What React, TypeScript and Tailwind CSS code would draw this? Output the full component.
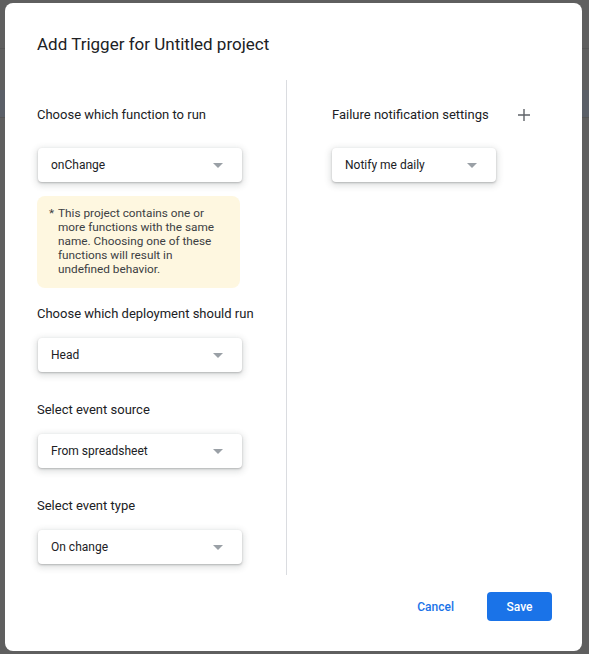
import React from "react";

const font = { fontFamily: "Roboto, 'Liberation Sans', Arial, sans-serif" };

function Select({ value, width }: { value: string; width: string }) {
  return (
    <div
      className={`${width} h-[34px] flex items-center justify-between pl-[13px] pr-[19px] bg-white rounded-[4px] shadow-[0_1px_2px_rgba(60,64,67,0.3),0_2px_6px_2px_rgba(60,64,67,0.15)]`}
    >
      <span className="text-[12px] text-[#202124] leading-[16px]">{value}</span>
      <svg width="10" height="5" viewBox="0 0 10 5">
        <path d="M0 0 L10 0 L5 5 Z" fill="#9aa0a6" />
      </svg>
    </div>
  );
}

function Label({ children, className = "" }: { children: React.ReactNode; className?: string }) {
  return <div className={`text-[13px] leading-[16px] text-[#202124] whitespace-nowrap ${className}`}>{children}</div>;
}

export default function App() {
  return (
    <div className="relative w-[589px] h-[654px] bg-[#5f5f5f] overflow-hidden" style={font}>
      <div className="h-[48px]" />
      <div className="h-px bg-[#565656]" />
      <div className="h-[41px]" />
      <div className="h-[27px] bg-[#5b6068]" />
      <div className="h-px bg-[#565656]" />

      <div className="absolute left-[5px] top-[3px] w-[577px] h-[648px] bg-white rounded-[8px] flex flex-col">
        <div className="pl-[32px] pt-[29px] text-[17px] leading-[24px] text-[#202124] whitespace-nowrap">
          Add Trigger for Untitled project
        </div>

        <div className="mt-[24px] flex h-[495px]">
          <div className="ml-[32px] w-[206px] flex flex-col">
            <Label className="mt-[27px]">Choose which function to run</Label>
            <div className="mt-[25px] ml-px">
              <Select value="onChange" width="w-[204px]" />
            </div>
            <div className="mt-[14px] w-[203px] h-[92px] bg-[#fef7e0] rounded-[8px] pt-[10px] pl-[12px] flex text-[11.8px] leading-[14px] text-[#3c4043]">
              <span className="w-[9px]">*</span>
              <div className="whitespace-nowrap">
                <div>This project contains one or</div>
                <div>more functions with the same</div>
                <div>name. Choosing one of these</div>
                <div>functions will result in</div>
                <div>undefined behavior.</div>
              </div>
            </div>
            <Label className="mt-[18px]">Choose which deployment should run</Label>
            <div className="mt-[16px] ml-px">
              <Select value="Head" width="w-[204px]" />
            </div>
            <Label className="mt-[30px]">Select event source</Label>
            <div className="mt-[16px] ml-px">
              <Select value="From spreadsheet" width="w-[204px]" />
            </div>
            <Label className="mt-[30px]">Select event type</Label>
            <div className="mt-[16px] ml-px">
              <Select value="On change" width="w-[204px]" />
            </div>
          </div>

          <div className="ml-[43px] w-px bg-[#dadce0]" />

          <div className="ml-[45px] w-[210px] flex flex-col">
            <div className="mt-[27px] flex items-center justify-between pr-[12px]">
              <Label>Failure notification settings</Label>
              <svg width="12" height="12" viewBox="0 0 12 12">
                <path d="M6 0 V12 M0 6 H12" stroke="#5f6368" strokeWidth="1.4" />
              </svg>
            </div>
            <div className="mt-[25px]">
              <Select value="Notify me daily" width="w-[164px]" />
            </div>
          </div>
        </div>

        <div className="mt-[17px] flex items-center justify-end pr-[30px]">
          <button className="mr-[33px] text-[12px] leading-[16px] font-medium text-[#1a73e8]">Cancel</button>
          <button className="w-[65px] h-[29px] rounded-[4px] bg-[#1a73e8] text-white text-[12px] font-medium">
            Save
          </button>
        </div>
      </div>
    </div>
  );
}
